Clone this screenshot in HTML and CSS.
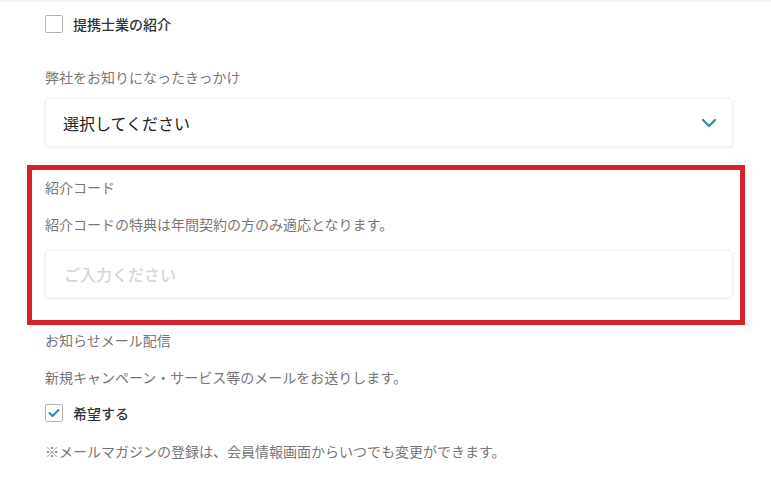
FILE: index.html
```html
<!DOCTYPE html>
<html lang="ja">
<head>
    <meta charset="UTF-8">
    <meta name="viewport" content="width=device-width, initial-scale=1.0">
    <title>お問い合わせフォーム</title>
    <link rel="stylesheet" href="styles.css">
</head>
<body>
    <div class="form">
        <label class="check-row">
            <span class="check-box"></span>
            <span class="check-text">提携士業の紹介</span>
        </label>

        <p class="field-label label-source">弊社をお知りになったきっかけ</p>
        <div class="select-box">
            <span>選択してください</span>
            <svg class="chevron" width="16" height="10" viewBox="0 0 16 10">
                <path d="M2 2 L8 8 L14 2" fill="none" stroke="#2c89a9" stroke-width="2.2" stroke-linecap="round" stroke-linejoin="round"/>
            </svg>
        </div>

        <div class="referral">
            <p class="field-label">紹介コード</p>
            <p class="field-note">紹介コードの特典は年間契約の方のみ適応となります。</p>
            <div class="text-input">ご入力ください</div>
        </div>

        <p class="field-label label-mail">お知らせメール配信</p>
        <p class="field-note">新規キャンペーン・サービス等のメールをお送りします。</p>
        <label class="check-row check-mail">
            <span class="check-box checked">
                <svg width="12" height="10" viewBox="0 0 12 10">
                    <path d="M1.5 5 L4.5 8 L10.5 2" fill="none" stroke="#2c89a9" stroke-width="2" stroke-linecap="round" stroke-linejoin="round"/>
                </svg>
            </span>
            <span class="check-text">希望する</span>
        </label>
        <p class="field-note note-last">※メールマガジンの登録は、会員情報画面からいつでも変更ができます。</p>
    </div>
</body>
</html>
```

FILE: styles.css
```css
body {
    margin: 0;
    background: #fff;
    font-family: "Noto Sans CJK JP", "Noto Sans", sans-serif;
    color: #777;
    border-top: 2px solid #f3f3f3;
}
.form {
    width: 688px;
    padding: 13px 0 30px 45px;
}
p {
    margin: 0;
}
.check-row {
    display: flex;
    align-items: center;
    height: 18px;
}
.check-box {
    width: 18px;
    height: 18px;
    box-sizing: border-box;
    border: 1.5px solid #b3b3b3;
    border-radius: 2px;
    display: flex;
    align-items: center;
    justify-content: center;
    background: #fff;
}
.check-text {
    margin-left: 10px;
    font-size: 14px;
    font-weight: 500;
    color: #333;
}
.field-label,
.field-note {
    font-size: 14px;
    line-height: 20px;
    color: #777;
}
.label-source {
    margin-top: 34px;
}
.select-box {
    margin-top: 11px;
    height: 49px;
    box-sizing: border-box;
    padding: 0 15px 0 17px;
    display: flex;
    align-items: center;
    justify-content: space-between;
    border: 1px solid #f0f0f0;
    border-radius: 4px;
    box-shadow: 0 1px 3px rgba(0, 0, 0, 0.08);
    font-size: 16px;
    color: #222;
}
.chevron {
    margin-right: 0;
}
.referral {
    position: relative;
    margin-top: 30px;
}
.referral::after {
    content: "";
    position: absolute;
    top: -12px;
    bottom: -27px;
    left: -18px;
    right: -12px;
    border: 5px solid #d8212b;
    pointer-events: none;
}
.referral .field-note {
    margin-top: 17px;
}
.text-input {
    margin-top: 16px;
    height: 48px;
    box-sizing: border-box;
    padding: 0 18px;
    display: flex;
    align-items: center;
    border: 1px solid #f0f0f0;
    border-radius: 4px;
    box-shadow: 0 1px 3px rgba(0, 0, 0, 0.08);
    font-size: 16px;
    font-weight: 500;
    color: #d6d6d6;
}
.label-mail {
    margin-top: 32px;
}
.label-mail + .field-note {
    margin-top: 17px;
}
.check-mail {
    margin-top: 17px;
}
.note-last {
    margin-top: 19px;
}
```
